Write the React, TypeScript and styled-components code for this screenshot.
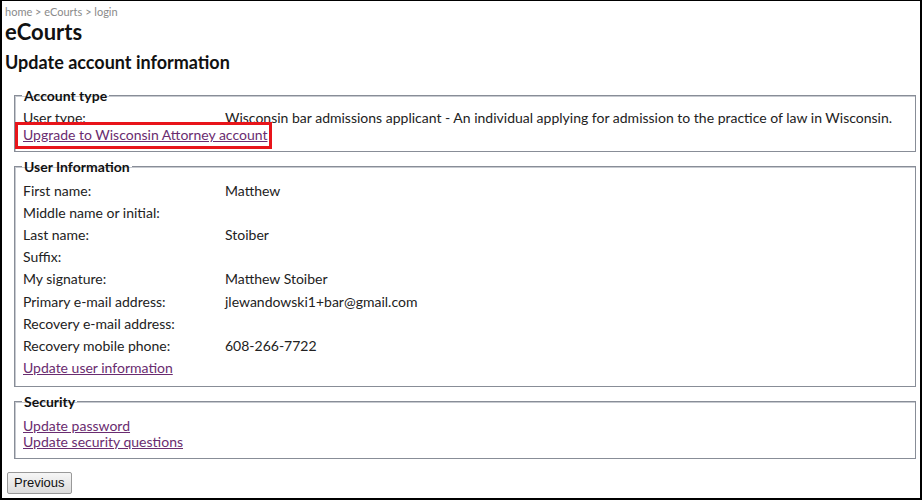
import React from 'react'
import styled, { createGlobalStyle } from 'styled-components'

const GlobalStyle = createGlobalStyle`
  html, body {
    margin: 0;
    padding: 0;
    background: #fff;
  }
  body {
    font-family: Lato, "Open Sans", sans-serif;
    color: #222;
  }
`

interface Row {
  label: string
  value?: string
}

const userRows: Row[] = [
  { label: 'First name:', value: 'Matthew' },
  { label: 'Middle name or initial:' },
  { label: 'Last name:', value: 'Stoiber' },
  { label: 'Suffix:' },
  { label: 'My signature:', value: 'Matthew Stoiber' },
  { label: 'Primary e-mail address:', value: 'jlewandowski1+bar@gmail.com' },
  { label: 'Recovery e-mail address:' },
  { label: 'Recovery mobile phone:', value: '608-266-7722' },
]

const App = () => {
  return (
    <Frame>
      <GlobalStyle />
      <Breadcrumb>home &gt; eCourts &gt; login</Breadcrumb>
      <SiteTitle>eCourts</SiteTitle>
      <PageTitle>Update account information</PageTitle>

      <Section $top={5} $bottom={2}>
        <Legend>Account type</Legend>
        <InfoRow $compact>
          <Label>User type:</Label>
          <Value>Wisconsin bar admissions applicant - An individual applying for admission to the practice of law in Wisconsin.</Value>
        </InfoRow>
        <Highlight>
          <Link href="#">Upgrade to Wisconsin Attorney account</Link>
        </Highlight>
      </Section>

      <Section $top={4} $bottom={7}>
        <Legend>User Information</Legend>
        {userRows.map(row => (
          <InfoRow key={row.label}>
            <Label>{row.label}</Label>
            <Value>{row.value}</Value>
          </InfoRow>
        ))}
        <InfoRow>
          <Link href="#">Update user information</Link>
        </InfoRow>
      </Section>

      <Section $top={8} $bottom={4}>
        <Legend>Security</Legend>
        <LinkList>
          <Link href="#">Update password</Link>
          <Link href="#">Update security questions</Link>
        </LinkList>
      </Section>

      <Button type="button">Previous</Button>
    </Frame>
  )
}

export default App

const Frame = styled.div`
  box-sizing: border-box;
  width: 922px;
  height: 500px;
  border: 2px solid #000;
  border-top-width: 1px;
  padding: 4px 4px 0 3px;
  font-size: 14px;
`
const Breadcrumb = styled.div`
  font-size: 11px;
  color: #8a8a8a;
  line-height: 13px;
`
const SiteTitle = styled.h1`
  margin: 3px 0 0;
  font-size: 22px;
  font-weight: 700;
  color: #111;
  line-height: 22px;
`
const PageTitle = styled.h2`
  margin: 8px 0 14px;
  font-size: 18px;
  font-weight: 700;
  color: #111;
  line-height: 22px;
`
const Section = styled.fieldset<{ $top: number; $bottom: number }>`
  margin: 0 0 6px 9px;
  padding: ${p => p.$top}px 8px ${p => p.$bottom}px 8px;
  border: 1px solid #888d97;
  box-shadow: inset 1px 1px 0 #c7cad0;
`
const Legend = styled.legend`
  padding: 0 2px;
  margin-left: -1px;
  font-weight: 700;
  font-size: 14px;
  color: #111;
`
const InfoRow = styled.div<{ $compact?: boolean }>`
  display: flex;
  align-items: center;
  height: ${p => (p.$compact ? '16px' : '22.2px')};
`
const Label = styled.span`
  width: 202px;
  flex-shrink: 0;
`
const Value = styled.span`
  white-space: nowrap;
`
const Highlight = styled.div`
  position: relative;
  display: inline-block;
  margin: -3px 0 0 -8px;
  padding: 2px 2px 3px 5px;
  border: 3px solid #e8141a;
  line-height: 16px;
`
const Link = styled.a`
  color: #6a2c70;
  text-decoration: underline;
`
const LinkList = styled.div`
  display: flex;
  flex-direction: column;
  align-items: flex-start;
  line-height: 16px;
  padding-bottom: 4px;
`
const Button = styled.button`
  margin: 7px 0 0 2px;
  font-family: "Liberation Sans", Arial, sans-serif;
  font-size: 13px;
  padding: 2px 6px;
  height: 22px;
  border: 1px solid #999;
  border-radius: 2px;
  background: linear-gradient(#f6f6f6, #dcdcdc);
  color: #111;
`
